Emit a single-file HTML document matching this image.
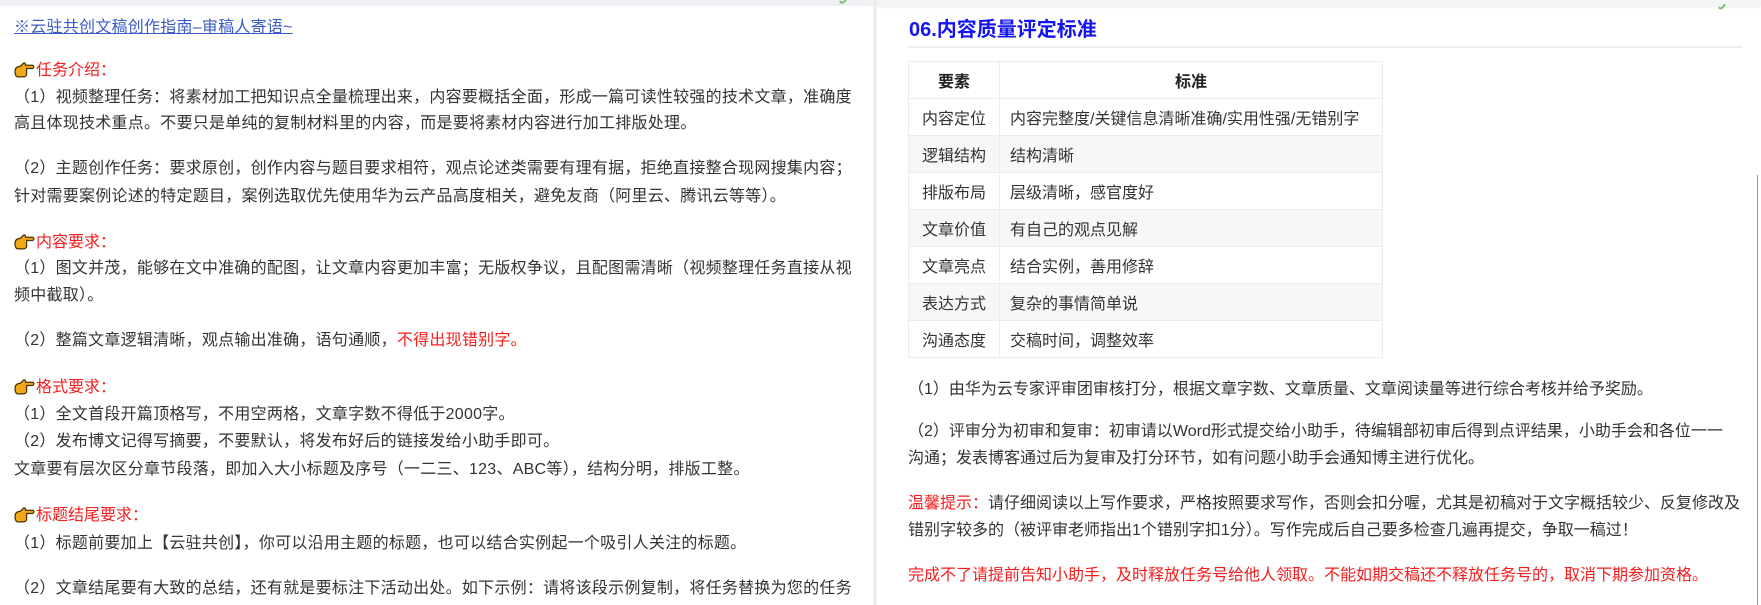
<!DOCTYPE html>
<html><head><meta charset="utf-8"><style>
*{margin:0;padding:0;box-sizing:border-box}
body{width:1761px;height:605px;overflow:hidden;background:#fff;font-family:"Liberation Sans","Noto Sans CJK SC",sans-serif;color:#333;position:relative}
.l{position:absolute;white-space:nowrap;font-size:16px;line-height:20px}
.lt{letter-spacing:0.25px}
.red{color:#f51d1d}
.hd{color:#f51d1d}
a{color:#3b5bc7;text-decoration:underline}
.hand{display:inline-block;width:21px;height:17px;vertical-align:-3px;margin-right:1px}
table{position:absolute;left:908px;top:61px;width:475px;border-collapse:collapse;font-size:16px}
td,th{border:1.5px solid #ececec;height:37px;padding:0 10px}
th{font-weight:bold;color:#222;background:#fff}
td:first-child{text-align:center;width:91px}
tr:nth-child(odd) td{background:#f6f7f9}
</style></head><body>
<div style="position:absolute;left:0;top:0;width:873px;height:6px;background:#eef0f4"></div>
<div style="position:absolute;left:873px;top:0;width:4px;height:605px;background:#eeeeee"></div>
<div style="position:absolute;left:877px;top:0;width:884px;height:6px;background:#f4f5f7;box-shadow:0 1px 3px rgba(0,0,0,.08)"></div>
<div style="position:absolute;left:1757px;top:175px;width:1px;height:430px;background:#999"></div>
<svg style="position:absolute;left:1717px;top:2px" width="10" height="10"><path d="M2 5 Q4 9 8 2" stroke="#7bc46a" stroke-width="2" fill="none"/></svg>
<svg style="position:absolute;left:838px;top:0px" width="10" height="6"><path d="M2 1 Q4 5 8 0" stroke="#7bc46a" stroke-width="2" fill="none"/></svg>

<div class="l lt" style="left:14px;top:18px"><a>※云驻共创文稿创作指南–审稿人寄语~</a></div>

<svg width="0" height="0" style="position:absolute"><defs><g id="h"><path d="M1 10 Q1 5 6 5 L9 2 Q11 1 11 4 L18 4 Q20 5 18 7 L12 7 L12 13 Q11 15 9 15 L4 15 Q1 15 1 10Z" fill="#f0a818" stroke="#4a3300" stroke-width="1.2"/></g></defs></svg>

<div class="l hd" style="left:14px;top:61px"><svg class="hand" viewBox="0 0 20 16"><use href="#h"/></svg>任务介绍：</div>
<div class="l lt" style="left:14px;top:88px">（1）视频整理任务：将素材加工把知识点全量梳理出来，内容要概括全面，形成一篇可读性较强的技术文章，准确度</div>
<div class="l lt" style="left:14px;top:114px">高且体现技术重点。不要只是单纯的复制材料里的内容，而是要将素材内容进行加工排版处理。</div>
<div class="l lt" style="left:14px;top:159px">（2）主题创作任务：要求原创，创作内容与题目要求相符，观点论述类需要有理有据，拒绝直接整合现网搜集内容；</div>
<div class="l lt" style="left:14px;top:187px">针对需要案例论述的特定题目，案例选取优先使用华为云产品高度相关，避免友商（阿里云、腾讯云等等）。</div>

<div class="l hd" style="left:14px;top:233px"><svg class="hand" viewBox="0 0 20 16"><use href="#h"/></svg>内容要求：</div>
<div class="l lt" style="left:14px;top:259px">（1）图文并茂，能够在文中准确的配图，让文章内容更加丰富；无版权争议，且配图需清晰（视频整理任务直接从视</div>
<div class="l lt" style="left:14px;top:286px">频中截取）。</div>
<div class="l lt" style="left:14px;top:331px">（2）整篇文章逻辑清晰，观点输出准确，语句通顺，<span class="red">不得出现错别字。</span></div>

<div class="l hd" style="left:14px;top:378px"><svg class="hand" viewBox="0 0 20 16"><use href="#h"/></svg>格式要求：</div>
<div class="l lt" style="left:14px;top:405px">（1）全文首段开篇顶格写，不用空两格，文章字数不得低于2000字。</div>
<div class="l lt" style="left:14px;top:432px">（2）发布博文记得写摘要，不要默认，将发布好后的链接发给小助手即可。</div>
<div class="l lt" style="left:14px;top:460px">文章要有层次区分章节段落，即加入大小标题及序号（一二三、123、ABC等），结构分明，排版工整。</div>

<div class="l hd" style="left:14px;top:506px"><svg class="hand" viewBox="0 0 20 16"><use href="#h"/></svg>标题结尾要求：</div>
<div class="l lt" style="left:14px;top:534px">（1）标题前要加上【云驻共创】，你可以沿用主题的标题，也可以结合实例起一个吸引人关注的标题。</div>
<div class="l lt" style="left:14px;top:579px">（2）文章结尾要有大致的总结，还有就是要标注下活动出处。如下示例：请将该段示例复制，将任务替换为您的任务</div>

<div class="l" style="left:909px;top:18px;font-size:20px;line-height:24px;font-weight:bold;color:#1414f0">06.内容质量评定标准</div>
<div style="position:absolute;left:908px;top:46px;width:834px;height:2px;background:#eeeeee"></div>
<table>
<tr><th>要素</th><th>标准</th></tr>
<tr><td>内容定位</td><td>内容完整度/关键信息清晰准确/实用性强/无错别字</td></tr>
<tr><td>逻辑结构</td><td>结构清晰</td></tr>
<tr><td>排版布局</td><td>层级清晰，感官度好</td></tr>
<tr><td>文章价值</td><td>有自己的观点见解</td></tr>
<tr><td>文章亮点</td><td>结合实例，善用修辞</td></tr>
<tr><td>表达方式</td><td>复杂的事情简单说</td></tr>
<tr><td>沟通态度</td><td>交稿时间，调整效率</td></tr>
</table>

<div class="l" style="left:908px;top:380px">（1）由华为云专家评审团审核打分，根据文章字数、文章质量、文章阅读量等进行综合考核并给予奖励。</div>
<div class="l" style="left:908px;top:422px">（2）评审分为初审和复审：初审请以Word形式提交给小助手，待编辑部初审后得到点评结果，小助手会和各位一一</div>
<div class="l" style="left:908px;top:449px">沟通；发表博客通过后为复审及打分环节，如有问题小助手会通知博主进行优化。</div>
<div class="l" style="left:908px;top:494px"><span class="red">温馨提示：</span>请仔细阅读以上写作要求，严格按照要求写作，否则会扣分喔，尤其是初稿对于文字概括较少、反复修改及</div>
<div class="l" style="left:908px;top:521px">错别字较多的（被评审老师指出1个错别字扣1分）。写作完成后自己要多检查几遍再提交，争取一稿过！</div>
<div class="l red" style="left:908px;top:566px">完成不了请提前告知小助手，及时释放任务号给他人领取。不能如期交稿还不释放任务号的，取消下期参加资格。</div>
</body></html>
